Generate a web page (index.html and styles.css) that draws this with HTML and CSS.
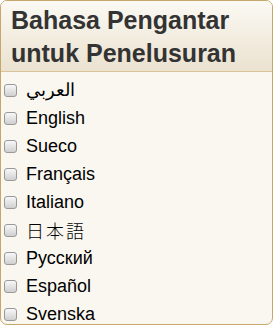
FILE: index.html
```html
<!DOCTYPE html>
<html lang="id">
<head>
    <meta charset="UTF-8">
    <title>Bahasa Pengantar untuk Penelusuran</title>
    <link rel="stylesheet" href="styles.css">
</head>
<body>
    <div class="panel">
        <div class="panel-header">
            <h2>Bahasa Pengantar untuk Penelusuran</h2>
        </div>
        <ul class="lang-list">
            <li><input type="checkbox" id="l-ar"><label for="l-ar" lang="ar">العربي</label></li>
            <li><input type="checkbox" id="l-en"><label for="l-en">English</label></li>
            <li><input type="checkbox" id="l-sueco"><label for="l-sueco">Sueco</label></li>
            <li><input type="checkbox" id="l-fr"><label for="l-fr">Français</label></li>
            <li><input type="checkbox" id="l-it"><label for="l-it">Italiano</label></li>
            <li><input type="checkbox" id="l-ja"><label for="l-ja" lang="ja" class="cjk">日本語</label></li>
            <li><input type="checkbox" id="l-ru"><label for="l-ru">Русский</label></li>
            <li><input type="checkbox" id="l-es"><label for="l-es">Español</label></li>
            <li><input type="checkbox" id="l-sv"><label for="l-sv">Svenska</label></li>
        </ul>
    </div>
</body>
</html>
```

FILE: styles.css
```css
body {
    margin: 0;
    font-family: "Liberation Sans", Arial, sans-serif;
    background: #fff;
}

.panel {
    height: 325px;
    box-sizing: border-box;
    border: 1px solid #c6a66a;
    border-radius: 7px;
    background: #faf7f0;
    overflow: hidden;
}

.panel-header {
    padding: 3px 10px 1px 10px;
    background: linear-gradient(#fbf9f3, #ebe2cf);
    border-bottom: 1px solid #d8c39a;
}

.panel-header h2 {
    margin: 0;
    font-size: 25px;
    line-height: 33px;
    font-weight: bold;
    color: #333;
}

.lang-list {
    list-style: none;
    margin: 0;
    padding: 4px 0 0 3px;
}

.lang-list li {
    display: flex;
    align-items: center;
    height: 28px;
    font-size: 18px;
    color: #000;
}

.lang-list input {
    appearance: none;
    -webkit-appearance: none;
    width: 13px;
    height: 13px;
    margin: 0 9px 0 0;
    border: 1px solid #999;
    border-radius: 3px;
    background: linear-gradient(#f8f8f8, #cfcfcf);
    box-sizing: border-box;
}

.lang-list label {
    line-height: 28px;
}

.lang-list .cjk {
    font-family: "Noto Sans CJK JP", sans-serif;
    font-weight: 300;
    letter-spacing: 2px;
}
```
